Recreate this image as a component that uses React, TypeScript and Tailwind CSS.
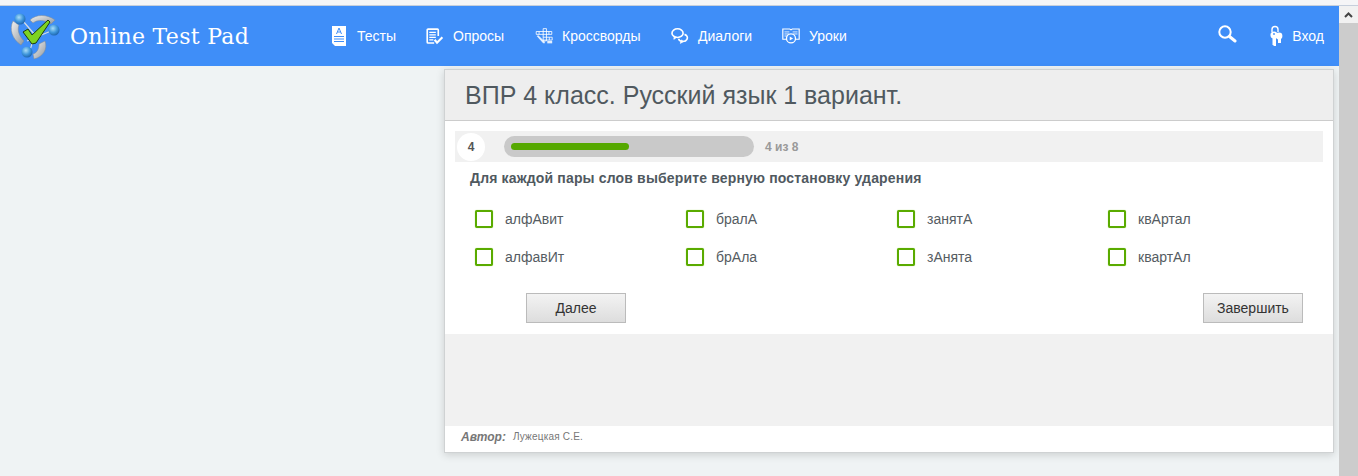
import React from "react";

const sans = { fontFamily: '"Liberation Sans", Arial, sans-serif' };

const Logo = () => (
  <svg width="52" height="50" viewBox="0 0 52 50" className="shrink-0">
    <defs>
      <radialGradient id="ball" cx="40%" cy="35%" r="70%">
        <stop offset="0%" stopColor="#a8dcf8" />
        <stop offset="55%" stopColor="#3f97dc" />
        <stop offset="100%" stopColor="#1b5fa8" />
      </radialGradient>
      <linearGradient id="arc" x1="0" y1="0" x2="1" y2="1">
        <stop offset="0%" stopColor="#f2f2f2" />
        <stop offset="100%" stopColor="#8f979e" />
      </linearGradient>
    </defs>
    <path d="M4 10 C0 18 3 28 12 34 L15 30 C10 25 8 19 10 14 Z" fill="url(#arc)" stroke="#7f8a94" strokeWidth="0.5" />
    <path d="M21 9 C27 3 38 3 46 9 L42 13 C36 9 29 8 24 12 Z" fill="url(#arc)" stroke="#7f8a94" strokeWidth="0.5" />
    <path d="M36 30 C39 38 34 46 25 48 L24 43 C28 42 30 38 30 33 Z" fill="url(#arc)" stroke="#7f8a94" strokeWidth="0.5" />
    <path d="M14 10 L26 24 L20 42" fill="none" stroke="#d5dce2" strokeWidth="1.2" />
    <path d="M42 20 L18 30" fill="none" stroke="#d5dce2" strokeWidth="1.2" />
    <path d="M14 21 L19 18 L23 24 L39 9 L41 11 L27 32 L23 33 Z" fill="#7ed321" stroke="#1d3a10" strokeWidth="1" strokeLinejoin="round" />
    <circle cx="11" cy="8" r="5.5" fill="url(#ball)" />
    <circle cx="45" cy="19" r="5.5" fill="url(#ball)" />
    <circle cx="18" cy="41" r="5.5" fill="url(#ball)" />
  </svg>
);

const TestIcon = () => (
  <svg width="16" height="22" viewBox="0 0 16 22">
    <path d="M1 1 H15 V21 H4 L1 18 Z" fill="#fff" />
    <path d="M3 11.5 H13 M3 14 H13 M3 16.5 H13" stroke="#3f8ef8" strokeWidth="1" />
    <path d="M5.5 9 L8 3 L10.5 9 M6.5 7 H9.5" stroke="#3f8ef8" strokeWidth="1" fill="none" />
  </svg>
);

const PollIcon = () => (
  <svg width="22" height="21" viewBox="0 0 22 21" fill="none" stroke="#fff">
    <path d="M10 18.5 H2.5 a1 1 0 0 1 -1 -1 V2.5 a1 1 0 0 1 1 -1 H14 a1 1 0 0 1 1 1 V10" strokeWidth="2" />
    <path d="M4 5.5 H12 M4 8.5 H12 M4 11.5 H12 M4 14.5 H9" strokeWidth="1.5" />
    <path d="M10.5 14.5 L13.5 18 L20 11.5" strokeWidth="2.6" />
  </svg>
);

const CrosswordIcon = () => (
  <svg width="22" height="22" viewBox="0 0 22 22" fill="none" stroke="#fff" strokeWidth="1">
    <path d="M1.5 5.5 H20.5 V9 H1.5 Z M10 2 H14 V17 H10 Z M5 5.5 V9 M17 5.5 V9 M10 12.5 H21 V16 H10 M17.5 12.5 V16" />
    <path d="M2 11 L4 10 L12 18 L12 20 L10 20 Z" fill="#fff" stroke="none" opacity="0.85" />
    <path d="M15 17 H21 V20 H15 Z" fill="#fff" stroke="none" opacity="0.85" />
  </svg>
);

const DialogIcon = () => (
  <svg width="22" height="20" viewBox="0 0 22 20" fill="none" stroke="#fff" strokeWidth="2">
    <ellipse cx="8" cy="6.5" rx="6.8" ry="5.3" />
    <path d="M4 10.5 L3.5 14 L7 11.5" fill="#fff" strokeWidth="1" />
    <path d="M16.5 8 C19.8 9 20.8 12 19.5 14 C18.5 16 15.5 17 12.5 16.5 M9.5 13.5 C9.5 15 10.5 16 12.5 16.5" />
    <path d="M13 14.5 L11.5 19 L15.5 16.5" fill="#fff" strokeWidth="1" />
  </svg>
);

const LessonIcon = () => (
  <svg width="22" height="20" viewBox="0 0 22 20" fill="none" stroke="#fff">
    <path d="M1 1.5 H9.5 L11 2.5 L12.5 1.5 H21 V14 H1 Z" strokeWidth="1.4" />
    <path d="M3 5 H9 M3 7.5 H9 M3 10 H7 M13 5 H19 M13 7.5 H19" strokeWidth="1" />
    <circle cx="11" cy="13" r="5.5" fill="#3f8ef8" strokeWidth="1.6" />
    <path d="M9.5 10.5 L13.5 13 L9.5 15.5 Z" fill="#fff" stroke="none" />
  </svg>
);

const SearchIcon = () => (
  <svg width="19" height="19" viewBox="0 0 19 19" fill="none" stroke="#fff">
    <circle cx="7" cy="7" r="5.7" strokeWidth="2" />
    <path d="M11.5 11.5 L17 16" strokeWidth="3" strokeLinecap="round" />
  </svg>
);

const KeysIcon = () => (
  <svg width="13" height="22" viewBox="0 0 13 22">
    <path d="M2 7 V4.5 a3 3 0 0 1 6 0 V7" fill="none" stroke="#fff" strokeWidth="1.4" />
    <circle cx="4" cy="10" r="3.6" fill="#fff" />
    <circle cx="9" cy="11" r="3.4" fill="#fff" />
    <path d="M2.5 12 H6 V21 H4 L2.5 19.5 Z" fill="#fff" />
    <path d="M8 12 H11 V18 H8 Z" fill="#fff" />
    <circle cx="4" cy="9" r="0.9" fill="#3f8ef8" />
  </svg>
);

const navItems = [
  { label: "Тесты", icon: <TestIcon />, width: "w-[96px]" },
  { label: "Опросы", icon: <PollIcon />, width: "w-[109px]" },
  { label: "Кроссворды", icon: <CrosswordIcon />, width: "w-[136px]" },
  { label: "Диалоги", icon: <DialogIcon />, width: "w-[111px]" },
  { label: "Уроки", icon: <LessonIcon />, width: "w-auto" },
];

const options = [
  "алфАвит", "бралА", "занятА", "квАртал",
  "алфавИт", "брАла", "зАнята", "квартАл",
];

const Option = ({ text }: { text: string }) => (
  <label className="flex items-center h-[38px] gap-[12px]">
    <span className="block w-[18px] h-[18px] rounded-[2px] border-2 border-[#5aab00] shadow-[0_0_1px_#8fd13f] bg-white shrink-0" />
    <span className="text-sm text-[#555c62]">{text}</span>
  </label>
);

const Button = ({ children }: { children: React.ReactNode }) => (
  <button className="w-[100px] h-[30px] border border-[#bbbbbb] bg-gradient-to-b from-[#f3f3f3] to-[#dddddd] text-sm text-[#333]">
    {children}
  </button>
);

export default function App() {
  return (
    <div style={sans} className="w-[1358px] h-[476px] overflow-hidden bg-[#eff3f4] flex flex-col">
      <div className="h-[6px] bg-[#f5f5f7] border-b border-[#c6cfdc] shrink-0" />
      <div className="flex flex-1 min-h-0">
        <div className="flex-1 min-w-0">
          {/* Header */}
          <header className="h-[60px] bg-[#3f8ef8] flex items-center text-white">
            <div className="w-[330px] flex items-center pl-[9px] gap-[9px] shrink-0">
              <Logo />
              <span className="text-[22px] tracking-[0.3px] font-['DejaVu_Serif',serif]">Online Test Pad</span>
            </div>
            <nav className="flex items-center flex-1">
              {navItems.map((item) => (
                <a key={item.label} className={`flex items-center gap-[9px] text-sm ${item.width}`}>
                  <span className="w-[18px] flex justify-center">{item.icon}</span>
                  <span>{item.label}</span>
                </a>
              ))}
            </nav>
            <div className="flex items-center pr-[15px]">
              <span className="mb-[4px]"><SearchIcon /></span>
              <span className="ml-[33px]"><KeysIcon /></span>
              <span className="ml-[9px] text-sm">Вход</span>
            </div>
          </header>

          {/* Test card */}
          <div className="ml-[444px] mt-[3px] w-[890px] h-[384px] border border-[#cfd2d3] bg-white shadow-[0_2px_8px_rgba(0,0,0,0.15)] flex flex-col">
            <div className="h-[51px] shrink-0 bg-[#eeeeee] border-b border-[#cccccc] flex items-center pl-5 pt-[2px]">
              <h1 className="text-[25px] text-[#50595f]">ВПР 4 класс. Русский язык 1 вариант.</h1>
            </div>
            <div className="px-[10px] pt-[10px] shrink-0">
              <div className="h-[31px] bg-[#f1f1f1] flex items-center pl-[2px]">
                <div className="w-[28px] h-[28px] rounded-full bg-white flex items-center justify-center text-xs font-bold text-[#555]">4</div>
                <div className="ml-[19px] w-[250px] h-[21px] rounded-full bg-[#c9c9c9] flex items-center pl-[7px]">
                  <div className="w-[118px] h-[7px] rounded-full bg-[#55a800]" />
                </div>
                <span className="ml-[11px] text-xs font-bold text-[#999]">4 из 8</span>
              </div>
            </div>
            <p className="pl-[25px] mt-[8px] text-sm font-bold tracking-[0.16px] text-[#50595f] leading-[17px]">
              Для каждой пары слов выберите верную постановку ударения
            </p>
            <div className="grid grid-cols-[211px_211px_211px_211px] pl-[30px] mt-[13px]">
              {options.map((o) => (
                <Option key={o} text={o} />
              ))}
            </div>
            <div className="flex justify-between pl-[81px] pr-[30px] mt-[17px]">
              <Button>Далее</Button>
              <Button>Завершить</Button>
            </div>
            <div className="mt-[11px] h-[92px] bg-[#f1f1f1] shrink-0" />
            <div className="flex items-start flex-1 pl-[16px] pt-[3px] text-[#777]">
              <b className="italic text-xs">Автор:</b>
              <span className="ml-[7px] text-[10px] tracking-[0.2px] leading-4">Лужецкая С.Е.</span>
            </div>
          </div>
        </div>

        {/* Scrollbar */}
        <div className="w-[19px] shrink-0 bg-[#cccccc] flex flex-col">
          <div className="h-[17px] bg-[#f1f1f1] flex items-center justify-center">
            <svg width="9" height="6" viewBox="0 0 9 6" fill="none" stroke="#444" strokeWidth="2">
              <path d="M1 5 L4.5 1.5 L8 5" />
            </svg>
          </div>
        </div>
      </div>
    </div>
  );
}
